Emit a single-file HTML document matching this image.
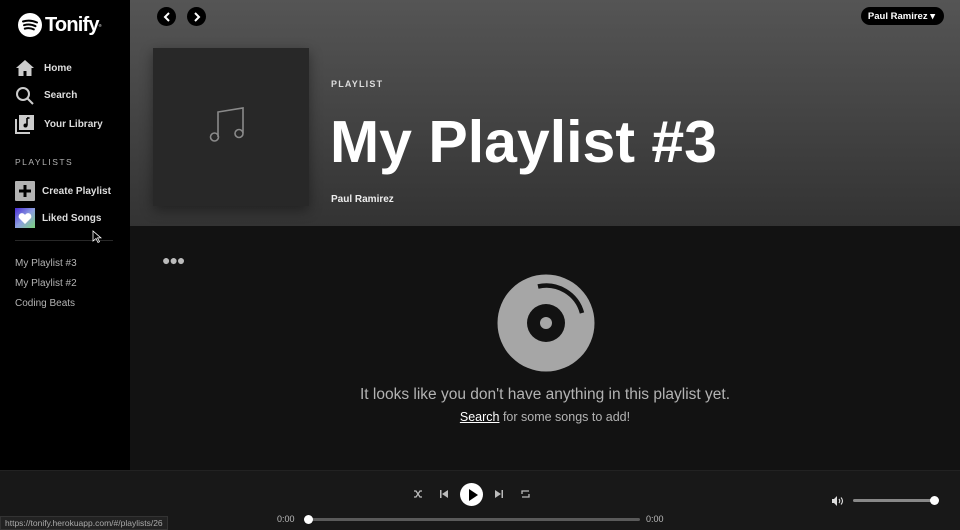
<!DOCTYPE html>
<html><head><meta charset="utf-8"><style>
*{margin:0;padding:0;box-sizing:border-box}
body{width:960px;height:530px;overflow:hidden;background:#121212;font-family:"Liberation Sans",sans-serif;position:relative;color:#fff}
.side{position:absolute;left:0;top:0;width:130px;height:470px;background:#000}
.logo{position:absolute;left:18px;top:13px;display:flex;align-items:center}
.logo span{font-size:20px;font-weight:bold;margin-left:3px;letter-spacing:-0.8px}
.nav{position:absolute;left:15px;font-size:10px;font-weight:bold;color:#ddd;display:flex;align-items:center}
.nav svg{margin-right:9px}
.ph{position:absolute;left:15px;top:157px;font-size:8.5px;letter-spacing:1.5px;color:#b3b3b3}
.pl{position:absolute;left:15px;font-size:10px;color:#b3b3b3}
.main{position:absolute;left:130px;top:0;width:830px;height:226px;background:linear-gradient(#555,#333)}
.circ{position:absolute;top:6px;width:19px;height:19px;border-radius:50%;background:#000;display:flex;align-items:center;justify-content:center}
.user{position:absolute;right:16px;top:7px;height:18px;padding:0 9px 0 7px;border-radius:9px;background:#000;font-size:9.5px;font-weight:bold;display:flex;align-items:center}
.cover{position:absolute;left:23px;top:48px;width:156px;height:158px;background:#282828;box-shadow:0 4px 12px rgba(0,0,0,.4)}
.bar{position:absolute;left:0;top:470px;width:960px;height:60px;background:#181818;border-top:1px solid #222}
</style></head><body>
<div class="side">
 <div class="logo"><svg width="24" height="24" viewBox="0 0 24 24"><circle cx="12" cy="12" r="12" fill="#fff"/><path d="M5 8.5q7-2.2 14 1M6 12.2q6-1.8 11.5 1M6.8 15.6q4.8-1.3 9 .8" stroke="#000" stroke-width="2" fill="none" stroke-linecap="round"/></svg><span>Tonify</span><sup style="font-size:4px">®</sup></div>
 <div class="nav" style="top:59px"><svg width="20" height="18" viewBox="0 0 20 18"><path d="M10 1L1 9h2.5v8h5v-5h3v5h5V9H19z" fill="#ccc"/></svg>Home</div>
 <div class="nav" style="top:86px"><svg width="20" height="19" viewBox="0 0 20 19"><circle cx="8" cy="8" r="6" stroke="#ccc" stroke-width="2" fill="none"/><path d="M12.5 12.5L18 18" stroke="#ccc" stroke-width="2"/></svg>Search</div>
 <div class="nav" style="top:114px"><svg width="20" height="20" viewBox="0 0 20 20"><path d="M1 5v14h14" stroke="#ccc" stroke-width="2" fill="none"/><rect x="4" y="1" width="15" height="15" fill="#ccc"/><path d="M12 4v7.5" stroke="#000" stroke-width="1.6"/><circle cx="10.5" cy="11.5" r="2" fill="#000"/><path d="M12 4h2.5" stroke="#000" stroke-width="1.6"/></svg>Your Library</div>
 <div class="ph">PLAYLISTS</div>
 <div class="nav" style="top:181px"><svg width="20" height="20" viewBox="0 0 20 20"><rect width="20" height="20" rx="1" fill="#b3b3b3"/><path d="M10 4v12M4 10h12" stroke="#000" stroke-width="3"/></svg><span style="margin-left:-2px">Create Playlist</span></div>
 <div class="nav" style="top:208px"><svg width="20" height="20" viewBox="0 0 20 20"><defs><linearGradient id="g" x1="0" y1="0" x2="1" y2="1"><stop offset="0" stop-color="#4a2dd6"/><stop offset=".5" stop-color="#8c9ee0"/><stop offset="1" stop-color="#7ad27a"/></linearGradient></defs><rect width="20" height="20" fill="url(#g)"/><path d="M10 16L4 10a3 3 0 0 1 6-3 3 3 0 0 1 6 3z" fill="#fff"/></svg><span style="margin-left:-2px">Liked Songs</span></div>
 <div style="position:absolute;left:15px;top:240px;width:98px;height:1px;background:#282828"></div>
 <div class="pl" style="top:258px">My Playlist #3</div>
 <div class="pl" style="top:278px">My Playlist #2</div>
 <div class="pl" style="top:298px">Coding Beats</div>
</div>
<div class="main">
 <div class="circ" style="left:27px;top:7px"><svg width="8" height="10"><path d="M6 1L2 5l4 4" stroke="#fff" stroke-width="2" fill="none"/></svg></div>
 <div class="circ" style="left:57px;top:7px"><svg width="8" height="10"><path d="M2 1l4 4-4 4" stroke="#fff" stroke-width="2" fill="none"/></svg></div>
 <div class="user">Paul Ramirez ▾</div>
 <div class="cover"><svg style="position:absolute;left:56px;top:55px" width="44" height="44" viewBox="0 0 44 44"><path d="M9 34V9l25-4v25" stroke="#8a8a8a" stroke-width="1.6" fill="none"/><circle cx="5.5" cy="34" r="4" stroke="#8a8a8a" stroke-width="1.6" fill="none"/><circle cx="30" cy="30.5" r="4" stroke="#8a8a8a" stroke-width="1.6" fill="none"/></svg></div>
 <div style="position:absolute;left:201px;top:79px;font-size:9px;letter-spacing:1.2px;color:#ddd;font-weight:bold">PLAYLIST</div>
 <div style="position:absolute;left:200px;top:107px;font-size:59px;font-weight:bold;letter-spacing:0;line-height:70px">My Playlist #3</div>
 <div style="position:absolute;left:201px;top:194px;font-size:10px;font-weight:bold;color:#eee">Paul Ramirez</div>
</div>
<div style="position:absolute;left:162px;top:252px;font-size:14px;letter-spacing:-1px;color:#bbb;font-weight:bold">●●●</div>
<svg style="position:absolute;left:496px;top:273px" width="100" height="100" viewBox="0 0 100 100"><circle cx="50" cy="50" r="48.5" fill="#a6a6a6"/><circle cx="50" cy="50" r="19" fill="#121212"/><circle cx="50" cy="50" r="6" fill="#a6a6a6"/><path d="M42 13.5A37 37 0 0 1 86 40" stroke="#121212" stroke-width="4.5" fill="none"/></svg>
<div style="position:absolute;left:130px;width:830px;top:386px;text-align:center;font-size:15.5px;color:#b3b3b3">It looks like you don't have anything in this playlist yet.</div>
<div style="position:absolute;left:130px;width:830px;top:410px;text-align:center;font-size:12.5px;color:#b3b3b3"><u style="color:#fff">Search</u> for some songs to add!</div>
<div class="bar">
 <svg style="position:absolute;left:413px;top:18px" width="10" height="10" viewBox="0 0 10 10"><path d="M1 2h2l4 6h2M1 8h2l4-6h2" stroke="#bbb" stroke-width="1.3" fill="none"/></svg>
 <svg style="position:absolute;left:439px;top:18px" width="10" height="10" viewBox="0 0 10 10"><rect x="1" y="1" width="1.5" height="8" fill="#bbb"/><path d="M9 1v8L3 5z" fill="#bbb"/></svg>
 <div style="position:absolute;left:460px;top:12px;width:23px;height:23px;border-radius:50%;background:#fff"></div>
 <svg style="position:absolute;left:468px;top:18px" width="10" height="12"><path d="M1 0v12l9-6z" fill="#000"/></svg>
 <svg style="position:absolute;left:494px;top:18px" width="10" height="10" viewBox="0 0 10 10"><rect x="7.5" y="1" width="1.5" height="8" fill="#bbb"/><path d="M1 1v8l6-4z" fill="#bbb"/></svg>
 <svg style="position:absolute;left:520px;top:18px" width="11" height="10" viewBox="0 0 11 10"><path d="M2 5V2h7M9 5v3H2" stroke="#bbb" stroke-width="1.3" fill="none"/></svg>
 <div style="position:absolute;left:277px;top:43px;font-size:9px;color:#bbb">0:00</div>
 <div style="position:absolute;left:307px;top:47px;width:333px;height:3px;border-radius:2px;background:#5a5a5a"></div>
 <div style="position:absolute;left:304px;top:44px;width:9px;height:9px;border-radius:50%;background:#fff"></div>
 <div style="position:absolute;left:646px;top:43px;font-size:9px;color:#bbb">0:00</div>
 <svg style="position:absolute;left:831px;top:24px" width="13" height="12" viewBox="0 0 13 12"><path d="M1 4h2l3-3v10L3 8H1z" fill="#ddd"/><path d="M8 4q1.5 2 0 4M10 2.5q3 3.5 0 7" stroke="#ddd" stroke-width="1.1" fill="none"/></svg>
 <div style="position:absolute;left:853px;top:28px;width:82px;height:3px;border-radius:2px;background:#888"></div>
 <div style="position:absolute;left:930px;top:25px;width:9px;height:9px;border-radius:50%;background:#fff"></div>
</div>
<div style="position:absolute;left:0;top:516px;height:14px;padding:0 4px;background:#222;border:1px solid #333;font-size:8.5px;color:#aaa;line-height:13px">https://tonify.herokuapp.com/#/playlists/26</div>
<svg style="position:absolute;left:92px;top:230px" width="10" height="14"><path d="M1 1v10l3-2.5 2 4 1.5-.8-2-3.8H9z" fill="#000" stroke="#fff" stroke-width=".8"/></svg>
</body></html>
